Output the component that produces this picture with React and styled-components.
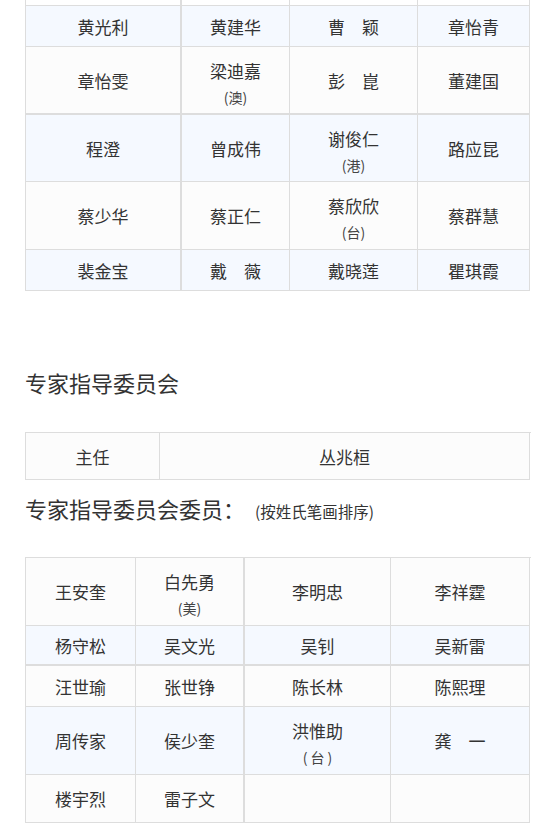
import React from "react";
import styled, { createGlobalStyle } from "styled-components";

const GlobalStyle = createGlobalStyle`
  html, body {
    margin: 0;
    padding: 0;
    background: #fff;
  }
  body {
    font-family: "Noto Sans CJK SC", "Noto Sans", sans-serif;
    color: #333;
  }
`;

const Page = styled.div`
  width: 552px;
  padding-left: 25px;
  box-sizing: border-box;
`;

const Grid = styled.div`
  display: grid;
  width: 505px;
  grid-template-columns: ${(p) => p.$cols};
  grid-template-rows: ${(p) => p.$rows};
  border-left: 1px solid #ddd;
  border-top: ${(p) => (p.$open ? "none" : "1px solid #ddd")};
  margin-top: ${(p) => p.$top || 0}px;
`;

const Cell = styled.div`
  box-sizing: border-box;
  display: flex;
  flex-direction: column;
  align-items: center;
  justify-content: center;
  padding-top: ${(p) => (p.$stacked ? 7 : 0)}px;
  border-right: ${(p) => (p.$thickRight ? 2 : 1)}px solid #ddd;
  border-bottom: ${(p) => (p.$thickBottom ? 2 : 1)}px solid #ddd;
  background: ${(p) => (p.$blue ? "#f5f9ff" : p.$plain ? "#fff" : "#fcfcfc")};
  font-size: 17px;
  line-height: 27px;
  color: #333;
`;

const Name = styled.span`
  white-space: pre;
`;

const Region = styled.span`
  font-size: 14px;
  line-height: 27px;
  color: #444;
  letter-spacing: ${(p) => p.$wide || 0}px;
  margin-right: ${(p) => -(p.$wide || 0)}px;
`;

const Title = styled.h2`
  margin: ${(p) => p.$top}px 0 0;
  height: 30px;
  font-size: 22px;
  font-weight: normal;
  line-height: 30px;
  color: #333;
`;

const Note = styled.span`
  font-size: 15.5px;
  line-height: 20px;
  margin-left: 10px;
`;

const Person = ({ name, region, wide }) => (
  <>
    <Name>{name}</Name>
    {region && <Region $wide={wide}>({region})</Region>}
  </>
);

const NameTable = ({ cols, rows, data, thickCol, thickRow, blueRows, top, tail }) => (
  <Grid $cols={cols} $rows={rows} $top={top} $open={tail}>
    {tail &&
      data[0].map((_, c) => (
        <Cell key={`t${c}`} $plain $thickRight={c === thickCol} />
      ))}
    {data.map((row, r) =>
      row.map((p, c) => (
        <Cell
          key={`${r}-${c}`}
          $blue={blueRows.includes(r)}
          $thickRight={c === thickCol}
          $thickBottom={r === thickRow}
          $stacked={!!(p && p.region)}
        >
          {p && <Person {...p} />}
        </Cell>
      ))
    )}
  </Grid>
);

const p = (name, region, wide) => ({ name, region, wide });

const committee = [
  [p("黄光利"), p("黄建华"), p("曹　颖"), p("章怡青")],
  [p("章怡雯"), p("梁迪嘉", "澳"), p("彭　崑"), p("董建国")],
  [p("程澄"), p("曾成伟"), p("谢俊仁", "港"), p("路应昆")],
  [p("蔡少华"), p("蔡正仁"), p("蔡欣欣", "台"), p("蔡群慧")],
  [p("裴金宝"), p("戴　薇"), p("戴晓莲"), p("瞿琪霞")],
];

const experts = [
  [p("王安奎"), p("白先勇", "美"), p("李明忠"), p("李祥霆")],
  [p("杨守松"), p("吴文光"), p("吴钊"), p("吴新雷")],
  [p("汪世瑜"), p("张世铮"), p("陈长林"), p("陈熙理")],
  [p("周传家"), p("侯少奎"), p("洪惟助", "台", 3), p("龚　一")],
  [p("楼宇烈"), p("雷子文"), null, null],
];

export default function App() {
  return (
    <Page>
      <GlobalStyle />
      <NameTable
        tail
        cols="156px 108px 128px 112px"
        rows="6px 41px 68px 67px 68px 41px"
        data={committee}
        thickCol={0}
        thickRow={1}
        blueRows={[0, 2, 4]}
      />

      <Title $top={76}>专家指导委员会</Title>

      <NameTable
        top={35}
        cols="134px 370px"
        rows="47px"
        data={[[p("主任"), p("丛兆桓")]]}
        thickCol={-1}
        thickRow={-1}
        blueRows={[]}
      />

      <Title $top={13}>
        专家指导委员会委员：<Note>(按姓氏笔画排序)</Note>
      </Title>

      <NameTable
        top={34}
        cols="110px 109px 146px 139px"
        rows="68px 40px 41px 68px 48px"
        data={experts}
        thickCol={1}
        thickRow={1}
        blueRows={[1, 3]}
      />
    </Page>
  );
}
